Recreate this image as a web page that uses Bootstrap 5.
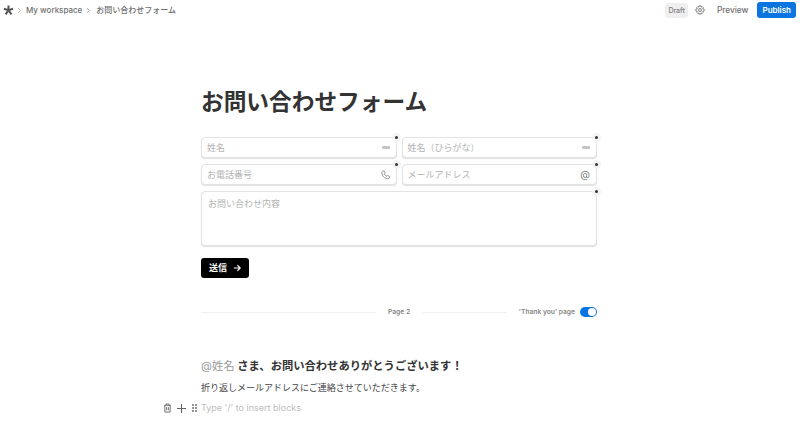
<!DOCTYPE html>
<html lang="ja">
<head>
  <meta charset="UTF-8" />
  <title>お問い合わせフォーム</title>
  <link href="https://cdn.jsdelivr.net/npm/bootstrap@5.3.0/dist/css/bootstrap.min.css" rel="stylesheet"/>
  <script src="https://cdn.jsdelivr.net/npm/bootstrap@5.3.0/dist/js/bootstrap.bundle.min.js"></script>
<style>
  html, body { height: 423px; overflow: hidden; }
  body {
    background: #fff;
    font-family: Inter, "Noto Sans CJK JP", sans-serif;
    color: #37352f;
  }
  .topbar { height: 20px; padding: 0 4px 0 3px; font-size: 8px; font-weight: 500; color: #6f6f6f; }
  .crumb-first { margin-left: 3px; margin-right: 4px; }
  .crumb-next { margin: 0 5px 0 4px; }
  .draft-tag { background: #efefef; color: #7d7d7d; font-size: 7px; border-radius: 3px; padding: 2px 3px; line-height: 11px; }
  .gear-icon { margin-left: 7px; }
  .preview-link { font-size: 8.300px; margin: 0 9px 0 12px; color: #6f6f6f; }
  .publish-btn { background: #0a74e0; color: #fff; font-size: 8px; font-weight: 600; border-radius: 3px; padding: 0 5px; height: 16px; line-height: 16px; }
  .page-body { width: 396px; margin-left: 201px; position: relative; }
  .form-title { font-size: 22.700px; font-weight: 700; line-height: 34px; margin: 65px 0 18px; color: #333; }
  .field-stack { gap: 6px; }
  .field-row { gap: 5px; }
  .field-box {
    position: relative; height: 21px; flex: 1 1 0; border: 1px solid #e3e3e3; border-radius: 4px;
    box-shadow: 0 1px 1px rgba(0,0,0,.12); padding: 0 5px; font-size: 9px; color: #b4b4b4; background: #fff;
  }
  .field-area { height: 55px; flex: none; padding-top: 5px; padding-left: 6px; line-height: 14px; }
  .field-dot {
    position: absolute; top: -5px; right: -5px; width: 9px; height: 9px; border-radius: 50%;
    background: #333; border: 3px solid #f3f3f3;
  }
  .field-icon { color: #7d7d7d; }
  .at-icon { font-size: 10px; margin-right: 1px; }
  .dash-icon { width: 8px; height: 3px; background: #c4c4c4; border-radius: 1px; margin-right: 1px; }
  .send-btn { width: 48px; height: 20px; margin-top: 12px; background: #000; color: #fff; border-radius: 3px; font-size: 9px; font-weight: 700; padding: 0 8px; }
  .page-break { margin-top: 24px; height: 20px; font-size: 6.700px; font-weight: 600; color: #858585; }
  .break-line { height: 1px; background: #f0f0f0; }
  .line-long { width: 175px; margin-right: 12px; }
  .line-short { width: 84px; margin-left: 13px; }
  .toggle-pill { width: 17px; height: 10px; border-radius: 5px; background: #0a74e0; position: relative; margin-left: 5px; }
  .toggle-pill::after { content: ""; position: absolute; right: 1px; top: 1px; width: 8px; height: 8px; border-radius: 50%; background: #fff; }
  .thanks-head { font-size: 11.300px; font-weight: 700; line-height: 18px; margin: 35px 0 0; color: #333; }
  .thanks-head span { color: #9a9a9a; font-weight: 400; }
  .thanks-text { font-size: 9px; line-height: 14px; margin: 6px 0 0; color: #444; }
  .insert-row { margin-top: 6px; height: 14px; font-size: 9px; color: #bdbdbd; position: relative; }
  .block-tools { position: absolute; right: 100%; top: 0; height: 14px; margin-right: 4px; color: #666; }
  .tool-plus { margin: 0 6px 0 5px; }
</style>
</head>
<body>
<div class="topbar d-flex align-items-center">
  <svg width="11" height="11" viewBox="0 0 12 12"><path d="M6 0.5v5.2M6 5.7l5-1.6M6 5.7l3.2 4.6M6 5.7l-3.2 4.6M6 5.7l-5-1.6" stroke="#555" stroke-width="2.2" fill="none"/></svg>
  <svg class="crumb-first" width="5" height="7" viewBox="0 0 5 7" fill="none" stroke="#bbb"><path d="M1 1l2.500 2.500L1 6"/></svg>
  <span>My workspace</span>
  <svg class="crumb-next" width="5" height="7" viewBox="0 0 5 7" fill="none" stroke="#bbb"><path d="M1 1l2.500 2.500L1 6"/></svg>
  <span>お問い合わせフォーム</span>
  <div class="ms-auto d-flex align-items-center">
    <span class="draft-tag">Draft</span>
    <svg class="gear-icon" width="10" height="10" viewBox="0 0 12 12" fill="none" stroke="#666" stroke-width="1"><circle cx="6" cy="6" r="1.800"/><path d="M5 1h2l.3 1.500 1.300-.6 1.400 1.400-.7 1.200L11 5v2l-1.700.5.7 1.200-1.400 1.400-1.300-.6L7 11H5l-.3-1.500-1.300.6L2 8.700l.7-1.200L1 7V5l1.700-.5L2 3.300l1.400-1.400 1.300.6z"/></svg>
    <span class="preview-link">Preview</span>
    <span class="publish-btn">Publish</span>
  </div>
</div>

<div class="page-body">
  <h1 class="form-title">お問い合わせフォーム</h1>

  <div class="field-stack d-flex flex-column">
    <div class="field-row d-flex">
      <div class="field-box d-flex align-items-center justify-content-between"><span>姓名</span><span class="dash-icon"></span><i class="field-dot"></i></div>
      <div class="field-box d-flex align-items-center justify-content-between"><span>姓名（ひらがな）</span><span class="dash-icon"></span><i class="field-dot"></i></div>
    </div>
    <div class="field-row d-flex">
      <div class="field-box d-flex align-items-center justify-content-between"><span>お電話番号</span>
        <svg class="field-icon" width="10" height="10" viewBox="0 0 12 12" fill="none" stroke="currentColor" stroke-width="1"><path d="M2 1.500l1.500-.5 1.500 2.500-1 1c.5 1.500 1.500 2.500 3 3l1-1 2.500 1.500-.5 1.500c-.3.7-1 1-1.700 1C4.500 10.500 1.500 7.500 1 3.200c0-.7.3-1.400 1-1.700z"/></svg>
        <i class="field-dot"></i></div>
      <div class="field-box d-flex align-items-center justify-content-between"><span>メールアドレス</span><span class="field-icon at-icon">@</span><i class="field-dot"></i></div>
    </div>
    <div class="field-box field-area d-flex"><span>お問い合わせ内容</span><i class="field-dot"></i></div>
  </div>

  <div class="send-btn d-flex align-items-center justify-content-between">
    <span>送信</span>
    <svg width="8" height="8" viewBox="0 0 10 10" fill="none" stroke="#fff" stroke-width="1.500"><path d="M1 5h8M5.500 1.500L9 5 5.500 8.500"/></svg>
  </div>

  <div class="page-break d-flex align-items-center">
    <div class="break-line line-long"></div>
    <span>Page 2</span>
    <div class="break-line line-short"></div>
    <span class="ms-auto">'Thank you' page</span>
    <span class="toggle-pill"></span>
  </div>

  <p class="thanks-head"><span>@姓名</span> さま、お問い合わせありがとうございます！</p>
  <p class="thanks-text">折り返しメールアドレスにご連絡させていただきます。</p>

  <div class="insert-row d-flex align-items-center">
    <div class="block-tools d-flex align-items-center">
      <svg width="9" height="10" viewBox="0 0 10 11" fill="none" stroke="#666" stroke-width="1"><path d="M1 2.500h8M3.500 2.500V1h3v1.500M2 2.500v7.500h6V2.500M4 4.500v3.500M6 4.500v3.500"/></svg>
      <svg class="tool-plus" width="9" height="9" viewBox="0 0 10 10" stroke="#666" stroke-width="1.200"><path d="M5 0v10M0 5h10"/></svg>
      <svg width="5" height="8" viewBox="0 0 5 8" fill="#666"><circle cx="1" cy="1" r=".9"/><circle cx="4" cy="1" r=".9"/><circle cx="1" cy="4" r=".9"/><circle cx="4" cy="4" r=".9"/><circle cx="1" cy="7" r=".9"/><circle cx="4" cy="7" r=".9"/></svg>
    </div>
    Type '/' to insert blocks
  </div>
</div>
</body>
</html>
